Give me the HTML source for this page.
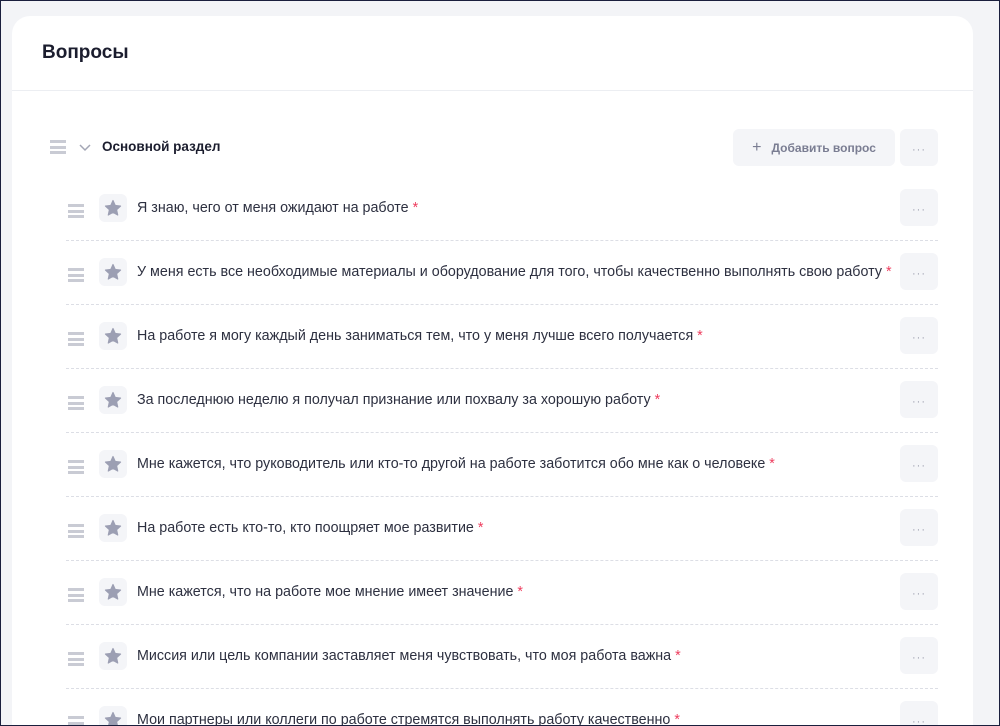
<!DOCTYPE html>
<html><head><meta charset="utf-8"><style>
*{box-sizing:border-box;margin:0;padding:0}
html,body{width:1000px;height:726px;overflow:hidden}
body{background:#f3f4f7;font-family:"Liberation Sans",sans-serif;position:relative}
.frame{position:absolute;left:0;top:0;width:1000px;height:726px;border:1px solid #1a1f3d;z-index:5;pointer-events:none}
.card{position:absolute;left:12px;top:16px;width:961px;height:710px;background:#fff;border-radius:18px 18px 0 0;overflow:hidden}
.title{position:absolute;left:30px;top:26px;font-size:19px;font-weight:bold;color:#1b1d2e}
.hr{position:absolute;left:0;right:0;top:74px;height:1px;background:#eceef2}
.handle{position:absolute;width:16px;height:14px}
.handle i{display:block;height:3px;background:#c9cbd4;margin-bottom:2.5px}
.sec{position:absolute;left:90px;top:123px;font-size:13.5px;font-weight:bold;color:#1b1d2e}
.btn{position:absolute;background:#f4f5f8;border-radius:6px;color:#9a9cac;font-size:12px;text-align:center}
.add{left:721px;top:113px;width:162px;height:37px;line-height:37px;font-weight:bold;color:#7a7d92}
.dots{width:38px;height:37px;line-height:43px;letter-spacing:1px;font-size:11px;overflow:hidden}
.row{position:absolute;left:54px;width:872px;height:64px}
.row .handle{left:2px;top:12px}
.star{position:absolute;left:33px;top:2px;width:28px;height:28px;background:#f4f5f8;border-radius:6px}
.star svg{position:absolute;left:5px;top:5px}
.txt{position:absolute;left:71px;top:8px;font-size:14.3px;color:#2d3040;white-space:nowrap}
.txt b{color:#ee3d5e;font-weight:normal}
.row .dots{position:absolute;left:834px;top:-3px}
.sep{position:absolute;left:0;right:0;top:48px;border-top:1px dashed #dcdee5}
</style></head><body>
<div class="frame"></div>
<div class="card">
<div class="title">Вопросы</div>
<div class="hr"></div>
<div class="handle" style="left:38px;top:124px"><i></i><i></i><i></i></div>
<svg style="position:absolute;left:66px;top:127px" width="14" height="10"><path d="M2 2l5 5 5-5" stroke="#a3a6b5" stroke-width="1.5" fill="none"/></svg>
<div class="sec">Основной раздел</div>
<div class="btn add"><span style="font-weight:normal;font-size:16px;margin-right:10px">+</span>Добавить вопрос</div>
<div class="btn dots" style="left:888px;top:113px">···</div>

<div class="row" style="top:176px"><div class="handle"><i></i><i></i><i></i></div><div class="star"><svg width="18" height="18" viewBox="0 0 24 24"><path d="M12 2l3 6.6 7.1.8-5.3 4.9 1.5 7.1L12 17.8 5.7 21.4l1.5-7.1L1.9 9.4 9 8.6z" fill="#9c9fb3" stroke="#9c9fb3" stroke-linejoin="round" stroke-width="1.5"/></svg></div><div class="txt">Я знаю, чего от меня ожидают на работе <b>*</b></div><div class="btn dots">···</div><div class="sep"></div></div>
<div class="row" style="top:240px"><div class="handle"><i></i><i></i><i></i></div><div class="star"><svg width="18" height="18" viewBox="0 0 24 24"><path d="M12 2l3 6.6 7.1.8-5.3 4.9 1.5 7.1L12 17.8 5.7 21.4l1.5-7.1L1.9 9.4 9 8.6z" fill="#9c9fb3" stroke="#9c9fb3" stroke-linejoin="round" stroke-width="1.5"/></svg></div><div class="txt">У меня есть все необходимые материалы и оборудование для того, чтобы качественно выполнять свою работу <b>*</b></div><div class="btn dots">···</div><div class="sep"></div></div>
<div class="row" style="top:304px"><div class="handle"><i></i><i></i><i></i></div><div class="star"><svg width="18" height="18" viewBox="0 0 24 24"><path d="M12 2l3 6.6 7.1.8-5.3 4.9 1.5 7.1L12 17.8 5.7 21.4l1.5-7.1L1.9 9.4 9 8.6z" fill="#9c9fb3" stroke="#9c9fb3" stroke-linejoin="round" stroke-width="1.5"/></svg></div><div class="txt">На работе я могу каждый день заниматься тем, что у меня лучше всего получается <b>*</b></div><div class="btn dots">···</div><div class="sep"></div></div>
<div class="row" style="top:368px"><div class="handle"><i></i><i></i><i></i></div><div class="star"><svg width="18" height="18" viewBox="0 0 24 24"><path d="M12 2l3 6.6 7.1.8-5.3 4.9 1.5 7.1L12 17.8 5.7 21.4l1.5-7.1L1.9 9.4 9 8.6z" fill="#9c9fb3" stroke="#9c9fb3" stroke-linejoin="round" stroke-width="1.5"/></svg></div><div class="txt">За последнюю неделю я получал признание или похвалу за хорошую работу <b>*</b></div><div class="btn dots">···</div><div class="sep"></div></div>
<div class="row" style="top:432px"><div class="handle"><i></i><i></i><i></i></div><div class="star"><svg width="18" height="18" viewBox="0 0 24 24"><path d="M12 2l3 6.6 7.1.8-5.3 4.9 1.5 7.1L12 17.8 5.7 21.4l1.5-7.1L1.9 9.4 9 8.6z" fill="#9c9fb3" stroke="#9c9fb3" stroke-linejoin="round" stroke-width="1.5"/></svg></div><div class="txt">Мне кажется, что руководитель или кто-то другой на работе заботится обо мне как о человеке <b>*</b></div><div class="btn dots">···</div><div class="sep"></div></div>
<div class="row" style="top:496px"><div class="handle"><i></i><i></i><i></i></div><div class="star"><svg width="18" height="18" viewBox="0 0 24 24"><path d="M12 2l3 6.6 7.1.8-5.3 4.9 1.5 7.1L12 17.8 5.7 21.4l1.5-7.1L1.9 9.4 9 8.6z" fill="#9c9fb3" stroke="#9c9fb3" stroke-linejoin="round" stroke-width="1.5"/></svg></div><div class="txt">На работе есть кто-то, кто поощряет мое развитие <b>*</b></div><div class="btn dots">···</div><div class="sep"></div></div>
<div class="row" style="top:560px"><div class="handle"><i></i><i></i><i></i></div><div class="star"><svg width="18" height="18" viewBox="0 0 24 24"><path d="M12 2l3 6.6 7.1.8-5.3 4.9 1.5 7.1L12 17.8 5.7 21.4l1.5-7.1L1.9 9.4 9 8.6z" fill="#9c9fb3" stroke="#9c9fb3" stroke-linejoin="round" stroke-width="1.5"/></svg></div><div class="txt">Мне кажется, что на работе мое мнение имеет значение <b>*</b></div><div class="btn dots">···</div><div class="sep"></div></div>
<div class="row" style="top:624px"><div class="handle"><i></i><i></i><i></i></div><div class="star"><svg width="18" height="18" viewBox="0 0 24 24"><path d="M12 2l3 6.6 7.1.8-5.3 4.9 1.5 7.1L12 17.8 5.7 21.4l1.5-7.1L1.9 9.4 9 8.6z" fill="#9c9fb3" stroke="#9c9fb3" stroke-linejoin="round" stroke-width="1.5"/></svg></div><div class="txt">Миссия или цель компании заставляет меня чувствовать, что моя работа важна <b>*</b></div><div class="btn dots">···</div><div class="sep"></div></div>
<div class="row" style="top:688px"><div class="handle"><i></i><i></i><i></i></div><div class="star"><svg width="18" height="18" viewBox="0 0 24 24"><path d="M12 2l3 6.6 7.1.8-5.3 4.9 1.5 7.1L12 17.8 5.7 21.4l1.5-7.1L1.9 9.4 9 8.6z" fill="#9c9fb3" stroke="#9c9fb3" stroke-linejoin="round" stroke-width="1.5"/></svg></div><div class="txt">Мои партнеры или коллеги по работе стремятся выполнять работу качественно <b>*</b></div><div class="btn dots">···</div></div>
</div>
</body></html>
